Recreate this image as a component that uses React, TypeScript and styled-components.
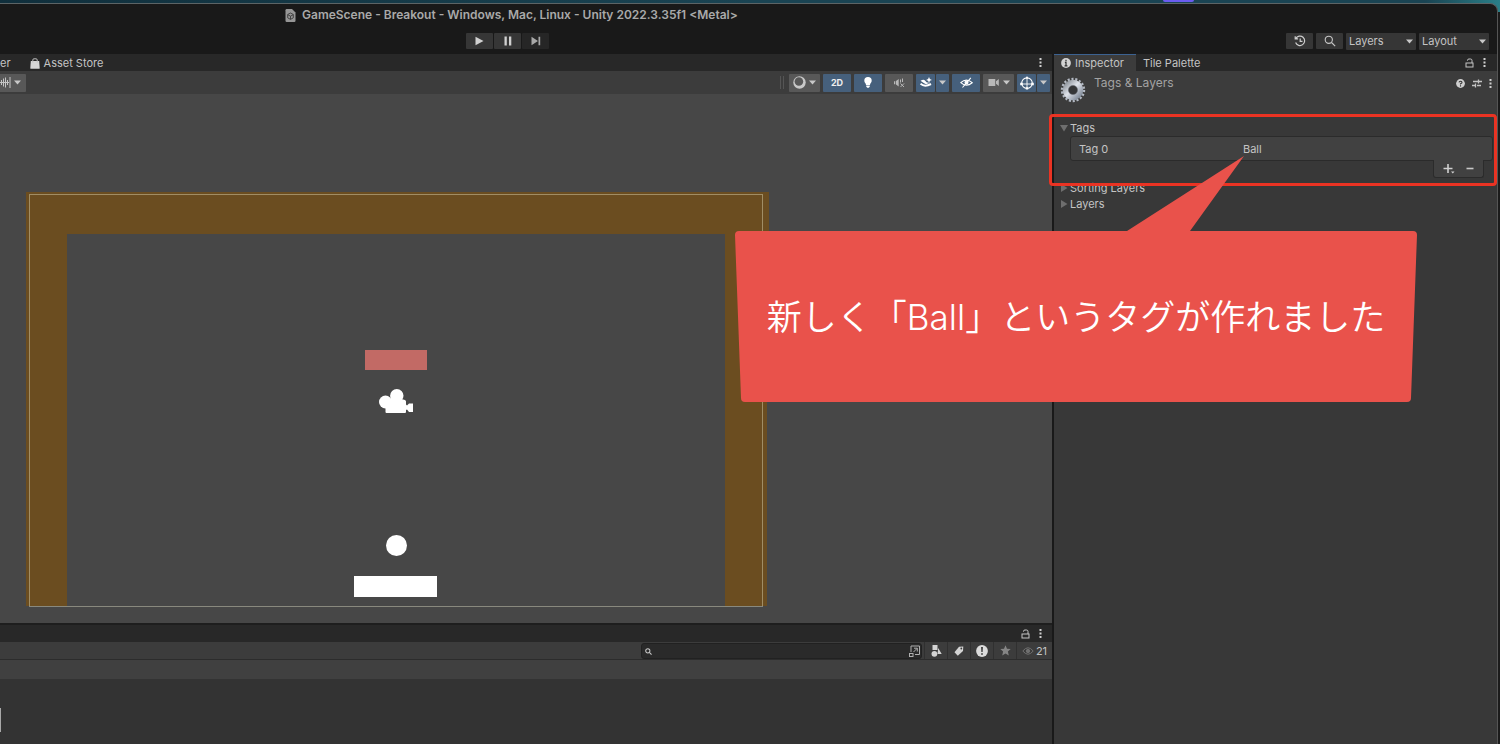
import React from 'react';
import styled, { createGlobalStyle, css } from 'styled-components';

const Global = createGlobalStyle`
  * { box-sizing: border-box; }
  body { margin: 0; background: #191919; }
  button, input, select { font: inherit; color: inherit; margin: 0; }
  svg { display: block; flex: none; }
`;

/* ---------- window frame ---------- */

const Desktop = styled.div`
  min-height: 100vh;
  display: flex;
  flex-direction: column;
  padding-right: 2px;
  overflow: hidden;
  background:
    linear-gradient(90deg, #102f3c, #1a4453 50%, #1a4453 95%, #2a7f88) top / 100% 12px no-repeat,
    #1b1b1b;
  color: #c4c4c4;
  font: 11px/16px Inter, "Liberation Sans", sans-serif;
`;

const MenuStrip = styled.div`
  display: flex;
  justify-content: flex-end;
  height: 3px;
  padding-right: 304px;
`;

const MenuMark = styled.span`
  width: 31px;
  height: 2px;
  border-radius: 0 0 2px 2px;
  background: #6a5cf0;
`;

const Window = styled.div`
  flex: 1;
  display: flex;
  flex-direction: column;
  border-top: 1px solid #5c6466;
  border-right: 1px solid #555;
  border-top-right-radius: 8px;
  background: #191919;
`;

const TitleBar = styled.header`
  display: flex;
  align-items: center;
  gap: 6px;
  height: 22px;
  padding-left: 285px;
  color: #a9a9a9;
`;

const Title = styled.h1`
  margin: 0;
  font-size: 12px;
  line-height: 16px;
  font-weight: 600;
  white-space: nowrap;
`;

const MainToolbar = styled.div`
  display: flex;
  align-items: center;
  justify-content: space-between;
  height: 28px;
  padding: 2px 8px 0 466px;
`;

const Group = styled.div<{ $gap?: number }>`
  display: flex;
  align-items: center;
  gap: ${p => p.$gap ?? 3}px;
`;

const BarButton = styled.button<{ $dim?: boolean }>`
  display: flex;
  align-items: center;
  justify-content: center;
  width: 27px;
  height: 16px;
  padding: 0;
  border: 0;
  border-radius: 1px;
  background: ${p => (p.$dim ? '#262626' : '#363636')};
  color: ${p => (p.$dim ? '#a8a8a8' : '#d0d0d0')};
`;

const SelectWrap = styled.label`
  position: relative;
  display: flex;
  align-items: center;
`;

const Select = styled.select`
  appearance: none;
  width: 70px;
  height: 17px;
  padding: 0 14px 0 3px;
  border: 0;
  border-radius: 1px;
  background: #363636;
  line-height: 16px;
`;

const SelectCaret = styled.span`
  position: absolute;
  right: 3px;
  pointer-events: none;
`;

/* ---------- panels ---------- */

const Workspace = styled.main`
  flex: 1;
  display: grid;
  grid-template-columns: minmax(0, 1fr) 443px;
  gap: 2px;
`;

const LeftColumn = styled.div`
  display: flex;
  flex-direction: column;
`;

const TabStrip = styled.div`
  display: flex;
  align-items: center;
  flex: none;
  height: 17px;
  background: #282828;
`;

const Tab = styled.button<{ $active?: boolean }>`
  display: flex;
  align-items: center;
  gap: 4px;
  height: 17px;
  padding: 0 12px 0 7px;
  border: 0;
  border-top: 1px solid ${p => (p.$active ? '#3c6291' : 'transparent')};
  background: ${p => (p.$active ? '#3c3c3c' : 'transparent')};
  white-space: nowrap;
`;

const FirstTab = styled(Tab)`
  padding-left: 0;
`;

const TabTools = styled.div<{ $end: number }>`
  display: flex;
  align-items: center;
  gap: 9px;
  margin-left: auto;
  padding-right: ${p => p.$end}px;
`;

const IconButton = styled.button`
  display: flex;
  padding: 0;
  border: 0;
  background: none;
`;

const SceneToolbar = styled.div`
  display: flex;
  align-items: center;
  flex: none;
  height: 23px;
  padding-right: 2px;
  overflow: hidden;
  background: #3c3c3c;
`;

const ToolButton = styled.button<{ $w?: number; $on?: boolean }>`
  display: flex;
  align-items: center;
  justify-content: center;
  gap: 3px;
  flex: none;
  width: ${p => p.$w ?? 28}px;
  height: 18px;
  padding: 0;
  border: 0;
  border-radius: 1px;
  background: ${p => (p.$on ? '#46607c' : '#585858')};
  color: ${p => (p.$on ? '#eee' : '#c4c4c4')};
  font-size: 9px;
  line-height: 16px;
  font-weight: 700;
`;

const SnapButton = styled(ToolButton)`
  margin-left: -6px;
`;

const Handle = styled.span`
  width: 4px;
  height: 13px;
  margin-right: 2px;
  border: solid #555;
  border-width: 0 1px;
`;

const ToolsRight = styled(Group)`
  margin-left: auto;
`;

/* ---------- scene canvas ---------- */

const Scene = styled.div`
  position: relative;
  flex: 1;
  min-height: 529px;
  overflow: hidden;
  background: #474747;
`;

const Sprite = styled.div<{ $x: number; $y: number; $w: number; $h: number; $fill: string; $round?: boolean }>`
  position: absolute;
  left: ${p => p.$x}px;
  top: ${p => p.$y}px;
  width: ${p => p.$w}px;
  height: ${p => p.$h}px;
  background: ${p => p.$fill};
  ${p => p.$round && css`border-radius: 50%;`}
`;

const CameraBounds = styled.div`
  position: absolute;
  left: 29px;
  top: 100px;
  width: 734px;
  height: 413px;
  border: 1px solid rgba(255, 255, 225, 0.36);
`;

const CameraGizmo = styled.svg`
  position: absolute;
  left: 379px;
  top: 295px;
`;

/* ---------- project panel ---------- */

const Project = styled.section`
  flex: none;
  border-top: 2px solid #1e1e1e;
  background: #333;
`;

const ProjectToolbar = styled.div`
  display: flex;
  justify-content: flex-end;
  height: 18px;
  border-bottom: 1px solid #2c2c2c;
  background: #3c3c3c;
`;

const SearchBox = styled.label`
  display: flex;
  align-items: center;
  width: 281px;
  height: 16px;
  margin: 1px 2px 0 0;
  padding: 0 1px 0 3px;
  border: 1px solid #212121;
  border-radius: 3px;
  background: #2a2a2a;
`;

const SearchInput = styled.input`
  flex: 1;
  min-width: 0;
  height: 14px;
  padding: 0 4px;
  border: 0;
  outline: 0;
  background: none;
`;

const FilterButton = styled.button<{ $wide?: boolean; $dim?: boolean }>`
  display: flex;
  align-items: center;
  justify-content: center;
  gap: 2px;
  width: ${p => (p.$wide ? 36 : 23)}px;
  height: 17px;
  padding: 0;
  border: 0;
  border-left: 1px solid #303030;
  background: #3c3c3c;
  color: ${p => (p.$dim ? '#858585' : '#d0d0d0')};
`;

const Count = styled.span`
  color: #c4c4c4;
`;

const Breadcrumb = styled.div`
  height: 19px;
  background: #404040;
`;

const AssetArea = styled.div`
  display: flex;
  align-items: center;
  height: 65px;
  padding-top: 16px;
`;

const AssetEdge = styled.span`
  width: 1px;
  height: 24px;
  background: #a8a8a8;
`;

/* ---------- inspector ---------- */

const Inspector = styled.aside`
  position: relative;
  background: #383838;
`;

const InspectorHeader = styled.div`
  display: flex;
  align-items: flex-start;
  height: 45px;
  padding: 4px 5px 0 6px;
  border-bottom: 1px solid #303030;
  background: #3c3c3c;
`;

const Heading = styled.h2`
  margin: 0 0 0 8px;
  color: #a3a3a3;
  font-size: 12px;
  line-height: 16px;
  font-weight: 400;
`;

const HeaderTools = styled.div`
  display: flex;
  align-items: center;
  gap: 7px;
  height: 16px;
  margin-left: auto;
`;

const GearBox = styled.span`
  padding-top: 2px;
`;

const TagSection = styled.section`
  position: relative;
  padding: 4px 4px 2px 6px;
`;

const Foldout = styled.button`
  display: flex;
  align-items: center;
  gap: 2px;
  height: 16px;
  padding: 0;
  border: 0;
  background: none;
`;

const FoldoutList = styled.div`
  padding-left: 6px;
`;

const TagList = styled.dl`
  display: grid;
  grid-template-columns: 164px 1fr;
  align-items: center;
  height: 25px;
  margin: 0 0 0 10px;
  padding: 0 8px;
  border: 1px solid #2b2b2b;
  border-radius: 3px;
  background: #414141;

  dd { margin: 0; }
`;

const ListFooter = styled.div`
  display: flex;
  align-items: center;
  justify-content: space-around;
  width: 51px;
  height: 18px;
  margin: -1px 9px 0 auto;
  padding: 0 4px;
  border: 1px solid #2b2b2b;
  border-top: 0;
  border-radius: 0 0 3px 3px;
  background: #414141;
  position: relative;
`;

/* ---------- annotations ---------- */

const Highlight = styled.div`
  position: absolute;
  z-index: 1;
  top: -2px;
  bottom: -6px;
  left: -5px;
  right: 0;
  border: 3px solid #ea3323;
  border-radius: 4px;
  pointer-events: none;
`;

const Callout = styled.div`
  position: absolute;
  z-index: 2;
  top: 101px;
  right: 79px;
  width: 684px;
  height: 248px;
`;

const CalloutShape = styled.svg`
  position: absolute;
  inset: 0;
`;

const CalloutText = styled.p`
  position: relative;
  margin: 0;
  padding-top: 138px;
  color: #fff;
  font: 350 35px/48px Inter, "Noto Sans CJK JP", sans-serif;
  text-align: center;
  white-space: nowrap;
`;

/* ---------- icons ---------- */

const Caret = () => (
  <svg width="7" height="5" viewBox="0 0 7 5" fill="#c8c8c8"><path d="M0 .5h7L3.500 4.500z" /></svg>
);

const Dots = () => (
  <svg width="3" height="11" viewBox="0 0 3 11" fill="#cfcfcf">
    <rect x=".5" y="1" width="2" height="2" /><rect x=".5" y="4.500" width="2" height="2" /><rect x=".5" y="8" width="2" height="2" />
  </svg>
);

const Lock = () => (
  <svg width="9" height="10" viewBox="0 0 9 10" fill="none" stroke="#c4c4c4">
    <rect x="1" y="5" width="7" height="4" /><path d="M2.500 2.800V2.300Q2.500 1 4 1h1.500Q7 1 7 2.500V5" />
  </svg>
);

const FileIcon = () => (
  <svg width="11" height="13" viewBox="0 0 11 13">
    <path d="M.5 1.200Q.5 0 1.700 0H7l3.500 3.500v8.300q0 1.200-1.200 1.200H1.700Q.5 13 .5 11.800z" fill="#969696" />
    <path d="M5.500 4l2.800 1.500v3.300l-2.800 1.600-2.800-1.600V5.500zM5.500 7.200v3M5.500 7.200l2.700-1.500M5.500 7.200L2.800 5.700" fill="none" stroke="#3a3a3a" strokeWidth=".9" />
  </svg>
);

const Bag = () => (
  <svg width="10" height="11" viewBox="0 0 10 11">
    <path d="M.8 3h8.400l.5 7.200q0 .6-.7.600H1Q.3 10.800.3 10.200z" fill="#d6d6d6" />
    <path d="M2.800 4.500V2Q2.800.8 4 .8h2Q7.200.8 7.200 2v2.500" fill="none" stroke="#bdbdbd" />
  </svg>
);

const Info = () => (
  <svg width="10" height="10" viewBox="0 0 9 9"><circle cx="4.500" cy="4.500" r="4.400" fill="#d4d4d4" /><path d="M4.500 1.500v1.400M3.500 4h1v3M3.200 7h2.600" stroke="#333" strokeWidth="1.100" fill="none" /></svg>
);

const Play = () => <svg width="9" height="10" viewBox="0 0 9 10" fill="currentColor"><path d="M.5.800L8.500 5l-8 4.200z" /></svg>;
const Pause = () => <svg width="8" height="10" viewBox="0 0 8 10" fill="currentColor"><path d="M.5.500h2.300v9H.5zM5 .5h2.300v9H5z" /></svg>;
const Step = () => <svg width="10" height="10" viewBox="0 0 10 10" fill="currentColor"><path d="M.5.800L7 5 .5 9.200zM7.500.800h1.700v8.400H7.500z" /></svg>;

const History = () => (
  <svg width="12" height="12" viewBox="0 0 12 12" fill="none" stroke="#cfcfcf" strokeWidth="1.200">
    <path d="M1.800 3.600A4.700 4.700 0 1 1 1.600 7.600M1.200 1.200v2.700h2.900M6.200 3.500v2.900h2.300" />
  </svg>
);

const Magnifier = ({ size }: { size: number }) => (
  <svg width={size} height={size} viewBox="0 0 12 12" fill="none" stroke="#c8c8c8" strokeWidth={size > 8 ? 1.1 : 1.8}>
    <circle cx="4.800" cy="4.800" r="3.600" /><path d="M7.500 7.500l3.700 3.700" />
  </svg>
);

const Grid = () => (
  <svg width="11" height="13" viewBox="0 0 11 13" stroke="#c4c4c4" fill="none"><path d="M0 6.500h9M1.500 4v5M3.500 2.500v8M5.500 1.500v10M7.500 4v5M10 1v11" /></svg>
);

const Shading = () => (
  <svg width="13" height="13" viewBox="0 0 13 13">
    <circle cx="6.500" cy="6.500" r="6.200" fill="#c8c8c8" /><circle cx="5.900" cy="5.500" r="4.300" fill="#585858" />
  </svg>
);

const Bulb = () => (
  <svg width="8" height="11" viewBox="0 0 8 11" fill="#fff"><path d="M4 0a3.700 3.700 0 0 1 3.700 3.700C7.700 5.500 6 6.200 6 8H2C2 6.200.3 5.500.3 3.700A3.700 3.700 0 0 1 4 0zM2.200 8.600h3.600v1L4.800 10.700H3.200l-1-1.100z" /></svg>
);

const Muted = () => (
  <svg width="11" height="10" viewBox="0 0 11 10" fill="none" stroke="#b8b8b8">
    <path d="M0 3.200h1.300v3H0zM2 3l2.700-2v7.500L2 6.500z" fill="#b8b8b8" stroke="none" /><path d="M6.500 1.500v3M8.500.5v3.500M6.500 5.500l3.500 3.500M10 5.500L6.500 9" />
  </svg>
);

const Effects = () => (
  <svg width="12" height="11" viewBox="0 0 12 11" fill="#fff">
    <path d="M9 0l.9 2 2 .9-2 .9-.9 2-.9-2-2-.9 2-.9z" />
    <path d="M.5 3.800Q3.500 2 5 3.500 6.500 6 9 5.700L10.500 5.400 6 7.200Q4 6.500.5 3.800z" />
    <path d="M.5 6.700Q4.500 10.500 11 7" fill="none" stroke="#fff" strokeWidth="2" />
  </svg>
);

const HiddenEye = () => (
  <svg width="13" height="11" viewBox="0 0 13 11" fill="none" stroke="#fff" strokeWidth="1.100">
    <path d="M.8 5.700Q6.300.500 12.200 5.700 6.300 10.500.8 5.700z" /><circle cx="6.500" cy="5.500" r="1.500" fill="#fff" /><path d="M2.500 10.500L10.800.800" />
  </svg>
);

const VideoCam = () => (
  <svg width="12" height="9" viewBox="0 0 12 9" fill="#b8b8b8"><path d="M.5 1h6.800v7H.5zM8 3.200L10.800 1v7L8 5.800z" /></svg>
);

const GizmoSphere = () => (
  <svg width="14" height="14" viewBox="0 0 14 14" fill="none" stroke="#fff" strokeWidth="1.100">
    <circle cx="7" cy="7.200" r="5.300" /><path d="M7 2v6M7 8h5M7 8H2M7 8v4.500" strokeWidth=".9" />
    <path d="M7 0l1.500 2.500h-3zM.2 6.700h2.500v2.600H.2zM11.300 6.700h2.500v2.600h-2.500zM5.800 11.200h2.400v2.400H5.800z" fill="#fff" stroke="none" />
  </svg>
);

const Expand = () => (
  <svg width="11" height="12" viewBox="0 0 11 12" fill="none" stroke="#b0b0b0">
    <path d="M2 7V1h8.500v8.500H6M4.500 7l3.500-3.500M5 3.200h3.300v3.300" /><rect x=".5" y="8.500" width="3.500" height="3" />
  </svg>
);

const Shapes = () => (
  <svg width="11" height="12" viewBox="0 0 11 12" fill="#d4d4d4"><path d="M1.500 0h5v5h-5zM7.200 3l3.500 6H6.500z" /><circle cx="3.400" cy="8.800" r="2.900" /></svg>
);

const Label = () => (
  <svg width="10" height="10" viewBox="0 0 10 10"><path d="M5 .8L9.300.500 9 5 3.800 9.700.500 6.200z" fill="#d4d4d4" /><circle cx="7.300" cy="2.500" r=".9" fill="#3c3c3c" /></svg>
);

const Alert = () => (
  <svg width="12" height="12" viewBox="0 0 12 12"><circle cx="6" cy="6" r="5.900" fill="#dcdcdc" /><path d="M5.100 2h1.800l-.3 5H5.400zM5.200 8.200h1.600v1.600H5.200z" fill="#333" /></svg>
);

const Star = () => (
  <svg width="11" height="11" viewBox="0 0 11 11" fill="#858585"><path d="M5.500.300l1.500 3.500 3.700.300-2.800 2.500.9 3.800-3.300-2-3.300 2 .9-3.800L.3 4.100 4 3.800z" /></svg>
);

const Eye = () => (
  <svg width="12" height="8" viewBox="0 0 12 8" fill="none" stroke="#707070"><path d="M.8 4Q6-2.500 11.200 4 6 10.500.8 4z" /><circle cx="6" cy="4" r="1.700" fill="#707070" /></svg>
);

const Help = () => (
  <svg width="9" height="9" viewBox="0 0 9 9"><circle cx="4.500" cy="4.500" r="4.400" fill="#cfcfcf" /><path d="M3 3.400Q3.200 2.200 4.500 2.200 6 2.200 6 3.400 6 4.200 4.500 4.700V5.400M4.500 6.200v1.200" stroke="#333" strokeWidth="1.100" fill="none" /></svg>
);

const Sliders = () => (
  <svg width="10" height="9" viewBox="0 0 10 9" stroke="#c4c4c4" fill="none"><path d="M1 2.500h5M6.500.500v4M6.500 2.500H10M0 6.500h3.500M3.500 4.500v4M5 6.500h4" strokeWidth="1.300" /></svg>
);

const Gear = () => (
  <svg width="26" height="26" viewBox="0 0 26 26">
    <defs>
      <linearGradient id="steel" x1="0" y1="0" x2="1" y2="1"><stop offset="0" stopColor="#8d939b" /><stop offset=".45" stopColor="#dfe3ea" /><stop offset="1" stopColor="#7d8796" /></linearGradient>
    </defs>
    <circle cx="13" cy="13" r="11" fill="none" stroke="#b4bac4" strokeWidth="2.400" strokeDasharray="2.100 1.740" />
    <circle cx="13" cy="13" r="7.300" fill="none" stroke="url(#steel)" strokeWidth="6" />
    <circle cx="13" cy="13" r="4.600" fill="#353638" stroke="#70757e" strokeWidth=".6" />
  </svg>
);

const Triangle = ({ open }: { open?: boolean }) => (
  <svg width="8" height="8" viewBox="0 0 8 8" fill="#6e6e6e"><path d={open ? 'M0 1h8L4 7.500z' : 'M1 0l6.500 4L1 8z'} /></svg>
);

const Plus = () => (
  <svg width="12" height="11" viewBox="0 0 12 11" fill="#d0d0d0"><path d="M4.200 1h1.600v3.700h3.700v1.600H5.800V10H4.200V6.300H.5V4.700h3.700zM8 8.500h3.500L9.800 10.500z" /></svg>
);

const Minus = () => <svg width="8" height="11" viewBox="0 0 8 11" fill="#c8c8c8"><path d="M.5 4.700h7v1.600h-7z" /></svg>;

/* ---------- pieces ---------- */

const Dropdown = ({ name }: { name: string }) => (
  <SelectWrap>
    <Select aria-label={name} defaultValue={name}><option>{name}</option></Select>
    <SelectCaret><Caret /></SelectCaret>
  </SelectWrap>
);

const SplitTool = ({ name, children }: { name: string; children: React.ReactNode }) => (
  <Group $gap={1}>
    <ToolButton $w={19} $on aria-label={name}>{children}</ToolButton>
    <ToolButton $w={13} $on aria-label={`${name} options`}><Caret /></ToolButton>
  </Group>
);

const WALL = '#6b4d20';

export default function App() {
  return (
    <Desktop>
      <Global />
      <MenuStrip><MenuMark /></MenuStrip>
      <Window>
        <TitleBar>
          <FileIcon />
          <Title>GameScene - Breakout - Windows, Mac, Linux - Unity 2022.3.35f1 &lt;Metal&gt;</Title>
        </TitleBar>
        <MainToolbar>
          <Group $gap={1}>
            <BarButton aria-label="Play"><Play /></BarButton>
            <BarButton aria-label="Pause"><Pause /></BarButton>
            <BarButton $dim aria-label="Step"><Step /></BarButton>
          </Group>
          <Group>
            <BarButton aria-label="Undo history"><History /></BarButton>
            <BarButton aria-label="Search"><Magnifier size={12} /></BarButton>
            <Dropdown name="Layers" />
            <Dropdown name="Layout" />
          </Group>
        </MainToolbar>

        <Workspace>
          <LeftColumn>
            <TabStrip role="tablist">
              <FirstTab role="tab">er</FirstTab>
              <Tab role="tab"><Bag />Asset Store</Tab>
              <TabTools $end={10}><IconButton aria-label="Scene menu"><Dots /></IconButton></TabTools>
            </TabStrip>
            <SceneToolbar>
              <SnapButton $w={32} aria-label="Grid snapping"><Grid /><Caret /></SnapButton>
              <ToolsRight>
                <Handle />
                <ToolButton $w={31} aria-label="Shading mode"><Shading /><Caret /></ToolButton>
                <ToolButton $on>2D</ToolButton>
                <ToolButton $on aria-label="Lighting"><Bulb /></ToolButton>
                <ToolButton aria-label="Audio"><Muted /></ToolButton>
                <SplitTool name="Effects"><Effects /></SplitTool>
                <ToolButton $on aria-label="Hidden objects"><HiddenEye /></ToolButton>
                <ToolButton $w={31} aria-label="Camera"><VideoCam /><Caret /></ToolButton>
                <SplitTool name="Gizmos"><GizmoSphere /></SplitTool>
              </ToolsRight>
            </SceneToolbar>
            <Scene>
              <Sprite $x={26} $y={98} $w={743} $h={42} $fill={WALL} />
              <Sprite $x={26} $y={140} $w={41} $h={372} $fill={WALL} />
              <Sprite $x={725} $y={140} $w={42} $h={372} $fill={WALL} />
              <CameraBounds />
              <Sprite $x={365} $y={256} $w={62} $h={20} $fill="#c26a65" />
              <CameraGizmo width="35" height="25" viewBox="0 0 35 25" fill="#fff">
                <circle cx="6.500" cy="13" r="6.500" /><circle cx="17.800" cy="6.800" r="6.700" />
                <path d="M6.500 9.500h14L26 11q1 .5 1 1.500v3l1 1 2-2h4v8.500h-4l-2-2.500-1 .5v2q0 1-1 1H7.500q-1 0-1-1z" />
              </CameraGizmo>
              <Sprite $x={386} $y={441} $w={21} $h={21} $fill="#fff" $round />
              <Sprite $x={354} $y={482} $w={83} $h={21} $fill="#fff" />
            </Scene>
            <Project>
              <TabStrip>
                <TabTools $end={10}>
                  <IconButton aria-label="Lock project panel"><Lock /></IconButton>
                  <IconButton aria-label="Project menu"><Dots /></IconButton>
                </TabTools>
              </TabStrip>
              <ProjectToolbar>
                <SearchBox>
                  <Magnifier size={7} />
                  <SearchInput type="text" aria-label="Search assets" />
                  <Expand />
                </SearchBox>
                <FilterButton aria-label="Filter by type"><Shapes /></FilterButton>
                <FilterButton aria-label="Filter by label"><Label /></FilterButton>
                <FilterButton aria-label="Import log"><Alert /></FilterButton>
                <FilterButton $dim aria-label="Favorites"><Star /></FilterButton>
                <FilterButton $wide $dim><Eye /><Count>21</Count></FilterButton>
              </ProjectToolbar>
              <Breadcrumb />
              <AssetArea><AssetEdge /></AssetArea>
            </Project>
          </LeftColumn>

          <Inspector>
            <TabStrip role="tablist">
              <Tab role="tab" $active aria-selected><Info />Inspector</Tab>
              <Tab role="tab">Tile Palette</Tab>
              <TabTools $end={11}>
                <IconButton aria-label="Lock inspector"><Lock /></IconButton>
                <IconButton aria-label="Inspector menu"><Dots /></IconButton>
              </TabTools>
            </TabStrip>
            <InspectorHeader>
              <GearBox><Gear /></GearBox>
              <Heading>Tags &amp; Layers</Heading>
              <HeaderTools>
                <IconButton aria-label="Help"><Help /></IconButton>
                <IconButton aria-label="Presets"><Sliders /></IconButton>
                <IconButton aria-label="Component menu"><Dots /></IconButton>
              </HeaderTools>
            </InspectorHeader>
            <TagSection>
              <Foldout aria-expanded="true"><Triangle open />Tags</Foldout>
              <TagList><dt>Tag 0</dt><dd>Ball</dd></TagList>
              <ListFooter>
                <IconButton aria-label="Add tag"><Plus /></IconButton>
                <IconButton aria-label="Remove tag"><Minus /></IconButton>
              </ListFooter>
              <Highlight />
            </TagSection>
            <FoldoutList>
              <Foldout aria-expanded="false"><Triangle />Sorting Layers</Foldout>
              <Foldout aria-expanded="false"><Triangle />Layers</Foldout>
            </FoldoutList>
            <Callout>
              <CalloutShape width="684" height="248" viewBox="0 0 684 248" fill="#e9524b">
                <path d="M5 76H393L510 1 456 76H679q4 0 4 4L677 243q0 4-4 4H11q-4 0-4-4L1 80q0-4 4-4z" />
              </CalloutShape>
              <CalloutText>新しく「Ball」というタグが作れました</CalloutText>
            </Callout>
          </Inspector>
        </Workspace>
      </Window>
    </Desktop>
  );
}
